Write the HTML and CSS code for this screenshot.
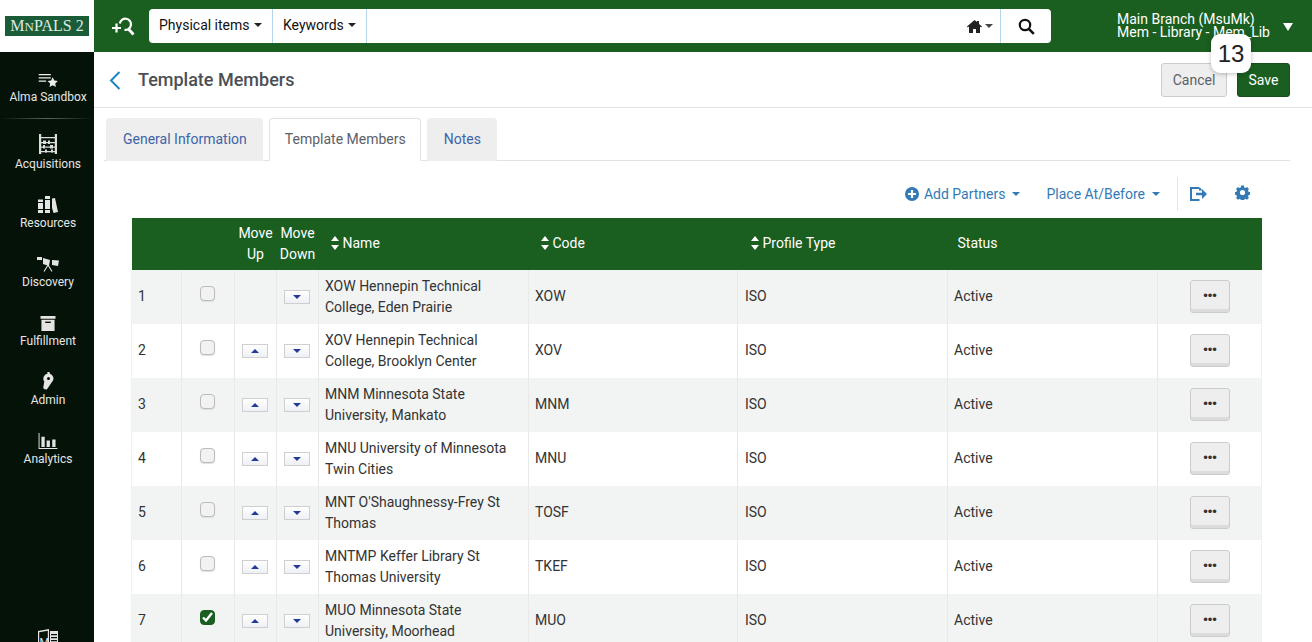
FILE: index.html
```html
<!DOCTYPE html>
<html lang="en">
<head>
<meta charset="utf-8">
<title>Template Members</title>
<link rel="stylesheet" href="styles.css">
</head>
<body>
<div class="app">
  <header class="topbar">
    <div class="logo-wrap"><div class="logo">M<span class="sc">N</span>PALS 2</div></div>
    <div class="topbar-main">
      <svg class="adv-search" width="24" height="20" viewBox="0 0 24 20"><g fill="none" stroke="#fff" stroke-width="2.2"><path d="M8.800 7.500a5.600 5.600 0 1 1 4.700 6.300"/><path d="M17 12.500l5.500 6" stroke-width="2.800"/><path d="M1 12h9M5.500 7.500v9"/></g></svg>
      <div class="searchbar">
        <div class="sb-seg sb-first">Physical items <span class="caret"></span></div>
        <div class="sb-seg sb-second">Keywords <span class="caret"></span></div>
        <div class="sb-input"></div>
        <div class="sb-home">
          <svg width="15" height="13" viewBox="0 0 15 13"><path fill="#222" d="M7.500 0L0 6.600l.8.9L2 6.500V13h4V9h3v4h4V6.500l1.200 1 .8-.9L12 3.900V1h-2v1.100z"/></svg>
          <span class="caret caret-sm"></span>
        </div>
        <div class="sb-go">
          <svg width="17" height="17" viewBox="0 0 17 17"><g fill="none" stroke="#111" stroke-width="2.200"><circle cx="7" cy="7" r="5.200"/><path d="M10.800 10.800l5 5" stroke-width="2.600"/></g></svg>
        </div>
      </div>
      <div class="user">
        <div class="user-text"><div>Main Branch (MsuMk)</div><div>Mem - Library - Mem_Lib</div></div>
        <span class="user-caret"></span>
      </div>
    </div>
  </header>
  <div class="below">
    <nav class="sidebar">
      <a class="nav-item nav-sandbox">
        <svg width="21" height="14" viewBox="0 0 21 15"><path fill="#eee" d="M0 1h13v1.400H0zM0 4.500h13v1.400H0zM0 8h8v1.400H0z"/><path fill="#eee" d="M15 4.500l1.700 3.600 3.800.5-2.800 2.600.7 3.800-3.400-1.900-3.400 1.900.7-3.800-2.800-2.600 3.800-.5z"/></svg>
        <span>Alma Sandbox</span>
      </a>
      <div class="nav-sep"></div>
      <a class="nav-item nav-first">
        <svg width="18" height="20" viewBox="0 0 18 20"><path fill="#ddd" d="M0 0h2.200v20H0zM15.800 0H18v20h-2.200zM2 3h14v1.200H2zM2 8h14v1.200H2zM2 12.500h14v1.200H2zM2 17h14v1.200H2z"/><path fill="#ddd" d="M4 6.500h3v3.500H4zM9 6.500h2v3.500H9zM4 11h2v3.500H4zM11 11h3v3.500h-3zM6 15.500h2v3H6zM12 15.500h2v3h-2z"/></svg>
        <span>Acquisitions</span>
      </a>
      <a class="nav-item">
        <svg width="20" height="17" viewBox="0 0 20 17"><path fill="#e4e4e4" d="M0 3.500h5V17H0zM7 0h5v17H7zM14 2.500l3-.5 3 14-4.500 1-1.500-5z"/><path fill="#041208" d="M0 6h5v1H0zM0 13h5v1H0zM7 3h5v1H7zM7 13h5v1H7z"/></svg>
        <span>Resources</span>
      </a>
      <a class="nav-item">
        <svg width="22" height="15" viewBox="0 0 22 15"><path fill="#e4e4e4" d="M0 0h5v3H0zM6 1l7 2-1 6-6-2zM15 3l7 .5-1 5.500-6-1z"/><path fill="none" stroke="#e4e4e4" stroke-width="1.100" d="M11 8l-4 6.500M11 8l4 6.500"/></svg>
        <span>Discovery</span>
      </a>
      <a class="nav-item">
        <svg width="16" height="15" viewBox="0 0 16 16"><path fill="#e4e4e4" d="M0 0h16v3H0zM1 4h14v12H1z"/><path fill="#041208" d="M5 6h6v1.500H5z"/></svg>
        <span>Fulfillment</span>
      </a>
      <a class="nav-item">
        <svg width="12" height="18" viewBox="0 0 12 18"><path fill="#e4e4e4" d="M5.500 0h2l.4 1.700A5 5 0 0 1 11 8.500L5 17.300c-1.500.8-4-.5-3.700-2L2.300 9.500A5 5 0 0 1 5.300 1.700z"/><circle cx="6.500" cy="6.500" r="1.500" fill="#041208"/></svg>
        <span>Admin</span>
      </a>
      <a class="nav-item">
        <svg width="20" height="16" viewBox="0 0 20 17"><path fill="#e4e4e4" d="M0 0h1v17H0zM0 16h20v1H0zM3 4h3.500v11H3zM8.500 8H12v7H8.500zM14.500 7H18v8h-3.500z"/></svg>
        <span>Analytics</span>
      </a>
      <div class="nav-bottom">
        <svg width="20" height="18" viewBox="0 0 20 18"><path fill="#e4e4e4" d="M0 2l11-2v18H0z"/><path fill="#e4e4e4" d="M12 2h8v16h-8z"/><path fill="#041208" d="M1.200 3.200l8.600-1.500V18H1.200zM13 5h6v1.200h-6zM13 8h6v1.200h-6zM13 11h6v1.200h-6z"/><text x="1.500" y="17" font-size="11" fill="#e4e4e4" font-family="Roboto">M</text></svg>
      </div>
    </nav>
    <main class="main">
      <div class="page-head">
        <div class="page-title">
          <svg class="back" width="12" height="19" viewBox="0 0 12 19"><path fill="none" stroke="#1a86c8" stroke-width="2" d="M10.500 1L2 9.500l8.500 8.500"/></svg>
          <h1>Template Members</h1>
        </div>
        <div class="page-actions">
          <button class="btn btn-cancel">Cancel</button>
          <button class="btn btn-save">Save</button>
        </div>
      </div>
      <div class="tabs">
        <div class="tab">General Information</div>
        <div class="tab tab-active">Template Members</div>
        <div class="tab">Notes</div>
      </div>
      <div class="toolbar">
        <a class="tool">
          <svg width="14" height="14" viewBox="0 0 14 14"><circle cx="7" cy="7" r="7" fill="#337ab7"/><path stroke="#fff" stroke-width="2.200" d="M7 3v8M3 7h8"/></svg>
          <span>Add Partners</span><span class="tool-caret"></span>
        </a>
        <a class="tool tool-place"><span>Place At/Before</span><span class="tool-caret"></span></a>
        <div class="tool-sep"></div>
        <svg class="tool-icon" width="17" height="14" viewBox="0 0 17 14"><path fill="none" stroke="#337ab7" stroke-width="2" d="M9.500 1H1v12h8.500"/><path fill="#337ab7" d="M6 5.800h6V2l5 5-5 5V8.200H6z"/><path fill="#337ab7" d="M9 1h1.500l2 2.500H9z"/></svg>
        <svg class="tool-icon tool-gear" width="15" height="15" viewBox="0 0 15 15"><path fill="#337ab7" d="M6 0h3l.4 2 1.300.6 1.700-1.100 2.100 2.100-1.100 1.700.6 1.300 2 .4v3l-2 .4-.6 1.300 1.100 1.700-2.100 2.100-1.700-1.100-1.300.6-.4 2H6l-.4-2-1.300-.6-1.700 1.100-2.100-2.100 1.100-1.700-.6-1.300-2-.4v-3l2-.4.600-1.300L.5 3.600l2.100-2.100 1.700 1.100L5.600 2z" transform="translate(.6 .6) scale(.92)"/><circle cx="7.500" cy="7.500" r="2.600" fill="#fff"/></svg>
      </div>
      <table class="grid">
        <colgroup>
          <col class="c-num"><col class="c-check"><col class="c-move"><col class="c-move"><col class="c-name"><col class="c-code"><col class="c-type"><col class="c-status"><col class="c-act">
        </colgroup>
        <thead>
          <tr>
            <th></th><th></th>
            <th class="th-move">Move Up</th>
            <th class="th-move">Move Down</th>
            <th><span class="sort"></span>Name</th>
            <th><span class="sort"></span>Code</th>
            <th class="inset"><span class="sort"></span>Profile Type</th>
            <th class="th-status">Status</th>
            <th></th>
          </tr>
        </thead>
        <tbody>
          <tr>
            <td class="one">1</td><td class="center"><span class="check"></span></td><td class="center"></td>
            <td class="center"><span class="arrow"><i class="down"></i></span></td>
            <td>XOW Hennepin Technical College, Eden Prairie</td><td class="one">XOW</td><td class="one inset">ISO</td><td class="one">Active</td>
            <td class="center"><button class="more">•••</button></td>
          </tr>
          <tr>
            <td class="one">2</td><td class="center"><span class="check"></span></td>
            <td class="center"><span class="arrow"><i class="up"></i></span></td>
            <td class="center"><span class="arrow"><i class="down"></i></span></td>
            <td>XOV Hennepin Technical College, Brooklyn Center</td><td class="one">XOV</td><td class="one inset">ISO</td><td class="one">Active</td>
            <td class="center"><button class="more">•••</button></td>
          </tr>
          <tr>
            <td class="one">3</td><td class="center"><span class="check"></span></td>
            <td class="center"><span class="arrow"><i class="up"></i></span></td>
            <td class="center"><span class="arrow"><i class="down"></i></span></td>
            <td>MNM Minnesota State University, Mankato</td><td class="one">MNM</td><td class="one inset">ISO</td><td class="one">Active</td>
            <td class="center"><button class="more">•••</button></td>
          </tr>
          <tr>
            <td class="one">4</td><td class="center"><span class="check"></span></td>
            <td class="center"><span class="arrow"><i class="up"></i></span></td>
            <td class="center"><span class="arrow"><i class="down"></i></span></td>
            <td>MNU University of Minnesota Twin Cities</td><td class="one">MNU</td><td class="one inset">ISO</td><td class="one">Active</td>
            <td class="center"><button class="more">•••</button></td>
          </tr>
          <tr>
            <td class="one">5</td><td class="center"><span class="check"></span></td>
            <td class="center"><span class="arrow"><i class="up"></i></span></td>
            <td class="center"><span class="arrow"><i class="down"></i></span></td>
            <td>MNT O'Shaughnessy-Frey St Thomas</td><td class="one">TOSF</td><td class="one inset">ISO</td><td class="one">Active</td>
            <td class="center"><button class="more">•••</button></td>
          </tr>
          <tr>
            <td class="one">6</td><td class="center"><span class="check"></span></td>
            <td class="center"><span class="arrow"><i class="up"></i></span></td>
            <td class="center"><span class="arrow"><i class="down"></i></span></td>
            <td>MNTMP Keffer Library St Thomas University</td><td class="one">TKEF</td><td class="one inset">ISO</td><td class="one">Active</td>
            <td class="center"><button class="more">•••</button></td>
          </tr>
          <tr>
            <td class="one">7</td>
            <td class="center"><span class="check checked"><svg width="11" height="10" viewBox="0 0 11 10"><path fill="none" stroke="#fff" stroke-width="2.400" d="M1 5.500l3 3L10 1"/></svg></span></td>
            <td class="center"><span class="arrow"><i class="up"></i></span></td>
            <td class="center"><span class="arrow"><i class="down"></i></span></td>
            <td>MUO Minnesota State University, Moorhead</td><td class="one">MUO</td><td class="one inset">ISO</td><td class="one">Active</td>
            <td class="center"><button class="more">•••</button></td>
          </tr>
        </tbody>
      </table>
    </main>
  </div>
  <div class="count-badge">13</div>
</div>
</body>
</html>
```
FILE: styles.css
```css
* { box-sizing: border-box; }
html, body { margin: 0; height: 100%; overflow: hidden; }
body { font-family: Roboto, "Liberation Sans", sans-serif; font-size: 14px; color: #333; background: #fff; }
.app { position: relative; width: 1312px; height: 642px; overflow: hidden; display: flex; flex-direction: column; }

.topbar { height: 52px; display: flex; flex: none; }
.logo-wrap { width: 94px; background: #fff; display: flex; align-items: center; justify-content: center; }
.logo { width: 84px; height: 20px; background: #1a5c37; color: #dfe9e1; font-family: "Liberation Serif", serif; font-size: 16px; line-height: 20px; text-align: center; white-space: nowrap; }
.logo .sc { font-size: 13px; }
.topbar-main { flex: 1; background: #1a5e20; display: flex; align-items: flex-start; position: relative; }
.adv-search { margin: 16px 0 0 17px; }
.searchbar { margin: 9px 0 0 14px; width: 902px; height: 34px; background: #fff; border-radius: 4px; display: flex; align-items: stretch; color: #111; }
.sb-seg { display: flex; align-items: center; gap: 4px; padding: 0 0 2px 10px; border-right: 1px solid #b5d6ea; }
.sb-first { width: 124px; }
.sb-second { width: 94px; }
.sb-input { flex: 1; }
.sb-home { width: 34px; display: flex; align-items: center; gap: 3px; border-right: 1px solid #b5d6ea; }
.sb-go { width: 50px; display: flex; align-items: center; justify-content: center; }
.caret { display: inline-block; border: 4px solid transparent; border-top-color: #222; border-bottom: 0; }
.caret-sm { border-top-color: #444; }
.user { position: absolute; left: 1023px; top: 13px; display: flex; color: #fff; }
.user-text { line-height: 13px; font-size: 14px; white-space: nowrap; }
.user-caret { position: absolute; left: 166px; top: 10px; border: 5px solid transparent; border-top: 8px solid #fff; border-bottom: 0; }

.below { flex: 1; display: flex; min-height: 0; }
.sidebar { width: 94px; flex: none; background: #041208; display: flex; flex-direction: column; align-items: center; position: relative; color: #e6e6e6; font-size: 12px; }
.nav-item { width: 94px; height: 59px; padding-left: 2px; display: flex; flex-direction: column; align-items: center; justify-content: flex-end; gap: 3px; line-height: 14px; }
.nav-sandbox { height: 52px; }
.nav-sep { width: 94px; height: 1px; margin: 14px 0 0; background: linear-gradient(90deg, #041208, #5a655c 50%, #041208); }
.nav-first { height: 52px; }
.nav-bottom { position: absolute; left: 38px; top: 577px; }

.main { flex: 1; min-width: 0; padding: 0 22px 0 10px; }
.page-head { height: 56px; margin-left: -10px; margin-right: -22px; padding: 11px 22px 0 15px; display: flex; justify-content: space-between; align-items: flex-start; border-bottom: 1px solid #e4e4e4; }
.page-title { display: flex; align-items: center; height: 34px; }
.back { margin-right: 17px; }
h1 { margin: 0 0 2px; font-size: 18px; font-weight: 500; color: #4b4f56; }
.page-actions { display: flex; gap: 10px; }
.btn { height: 34px; border-radius: 3px; font: inherit; padding: 0; }
.btn-cancel { width: 66px; background: #eee; border: 1px solid #ccc; color: #5c6168; }
.btn-save { width: 53px; background: #1a5e20; border: 1px solid #174f1c; color: #fff; }

.tabs { display: flex; gap: 6px; height: 53px; padding: 10px 0 0 2px; border-bottom: 1px solid #e2e2e2; }
.tab { height: 43px; padding: 0 16px 2px 17px; display: flex; align-items: center; background: #eee; color: #3e64a8; border-radius: 4px 4px 0 0; }
.tab-active { padding: 0 14px 2px 15px; background: #fff; color: #5b6068; border: 1px solid #e2e2e2; border-bottom: 1px solid #fff; }

.toolbar { height: 57px; display: flex; align-items: flex-start; justify-content: flex-end; padding: 18px 40px 0 0; color: #337ab7; }
.tool { display: flex; align-items: center; height: 30px; line-height: 30px; }
.tool svg { margin-right: 5px; }
.tool-caret { margin-left: 7px; border: 4px solid transparent; border-top: 4px solid #337ab7; border-bottom: 0; }
.tool:first-child .tool-caret { margin-left: 6px; }
.tool-place { margin-left: 27px; }
.tool-sep { width: 1px; height: 34px; margin: -2px 0 0 17px; background: #e6e6e6; }
.tool-icon { margin: 8px 0 0 12px; }
.tool-gear { margin: 6px 0 0 28px; }

.grid { width: 1130px; margin-left: 27px; border-collapse: collapse; table-layout: fixed; color: #333; }
.c-num { width: 50px; }
.c-check { width: 53px; }
.c-move { width: 42px; }
.c-name { width: 210px; }
.c-code { width: 209px; }
.c-type { width: 210px; }
.c-status { width: 210px; }
.c-act { width: 104px; }
th { height: 52px; background: #1a5e20; color: #fff; font-weight: 400; text-align: left; padding: 0 6px 2px; line-height: 21px; }
th.th-move { text-align: center; padding: 0; }
th.th-status { padding-left: 10px; }
th.inset { padding-left: 7px; }
.sort { display: inline-block; position: relative; width: 8px; height: 14px; margin: 0 4px 0 6px; vertical-align: -2px; }
.sort::before, .sort::after { content: ""; position: absolute; left: 0; border: 4px solid transparent; }
.sort::before { top: 0; border-top: 0; border-bottom: 5px solid #fff; }
.sort::after { bottom: 0; border-bottom: 0; border-top: 5px solid #fff; }
td { height: 54px; padding: 0 6px; line-height: 21px; border-left: 1px solid #e9e9e9; vertical-align: middle; }
td.one { padding-bottom: 2px; }
td.inset { padding-left: 7px; }
td:first-child { border-left: 1px solid #f0f0f0; }
td:last-child { border-right: 1px solid #f0f0f0; }
tbody tr:nth-child(odd) { background: #f2f4f3; }
td.center { text-align: center; padding: 0; }
.check { display: inline-block; width: 15px; height: 15px; margin: 0 0 8px -2px; vertical-align: middle; border: 1px solid #bbb; border-radius: 4px; background: #f2f2f2; box-shadow: 0 1px 1px #e0e0e0; }
.check.checked { background: #1a5e20; border-color: #1a5e20; display: inline-flex; align-items: center; justify-content: center; box-shadow: none; }
.arrow { display: inline-flex; width: 26px; height: 14px; margin: 0 2px 2px 0; align-items: center; justify-content: center; background: linear-gradient(#fff, #eef0f6); border: 1px solid #cfcfcf; vertical-align: middle; }
.arrow i { display: block; border: 4px solid transparent; }
.arrow .up { border-top: 0; border-bottom: 4px solid #233b98; }
.arrow .down { border-bottom: 0; border-top: 4px solid #233b98; }
.more { width: 40px; height: 33px; margin: 0 0 2px; padding: 0 0 1px 1px; background: #eee; border: 1px solid #ccc; border-radius: 3px; box-shadow: inset 0 -3px 0 #dcdcdc; color: #333; font: 13px/1 "Liberation Sans", sans-serif; }

.count-badge { position: absolute; left: 1211px; top: 34px; width: 40px; height: 39px; background: #fff; border-radius: 9px; box-shadow: 0 1px 4px rgba(0,0,0,.25); color: #222; font: 24px/39px "Liberation Sans", sans-serif; text-align: center; }
```
